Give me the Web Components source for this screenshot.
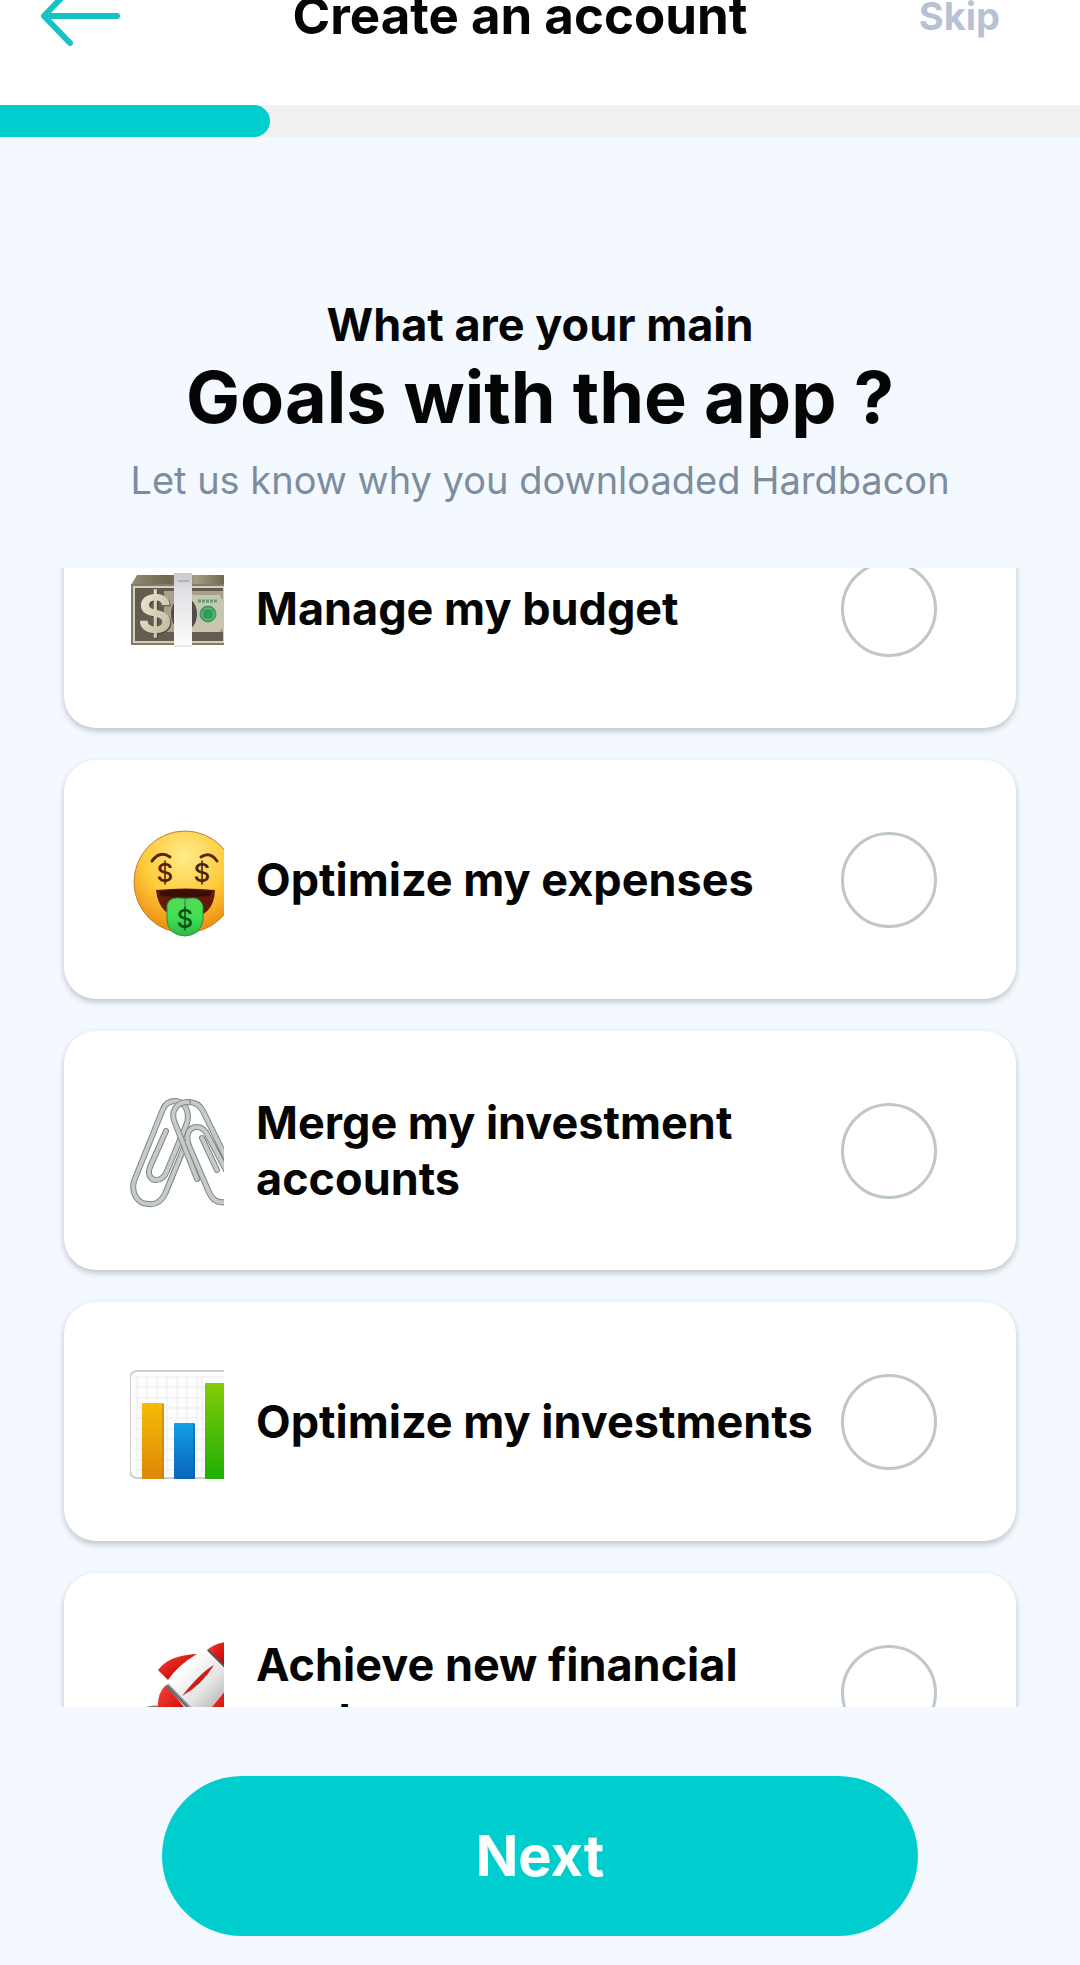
<!DOCTYPE html>
<html lang="en">
<head>
  <meta charset="UTF-8">
  <meta name="viewport" content="width=device-width, initial-scale=1.0">
  <title>Create an account</title>
  <style>
    body {
      margin: 0;
      background: #f4f9ff;
      font-family: Inter, "Liberation Sans", sans-serif;
      color: #050505;
    }
  </style>
</head>
<body>
  <goals-page></goals-page>

  <script>
    const icons = {
      money: `
        <defs>
          <linearGradient id="edge" x1="0" x2="1"><stop offset="0" stop-color="#918c77"/><stop offset=".4" stop-color="#6d6650"/><stop offset=".7" stop-color="#a39d86"/><stop offset="1" stop-color="#6e6851"/></linearGradient>
          <linearGradient id="band" x1="0" x2="0" y1="0" y2="1"><stop offset="0" stop-color="#c9cacf"/><stop offset=".25" stop-color="#e0e1e5"/><stop offset="1" stop-color="#fdfdfe"/></linearGradient>
          <linearGradient id="coin" x1="0" x2="1" y1="0" y2="1"><stop offset="0" stop-color="#f3f0dc"/><stop offset="1" stop-color="#b9b292"/></linearGradient>
        </defs>
        <path d="M7 27H94V37H1Z" fill="url(#edge)"/>
        <path d="M1 36H94V97H1Z" fill="#817c68"/>
        <path d="M4 39H94V94H4Z" fill="#625d50" stroke="#d5cfb6" stroke-width="2"/>
        <path d="M34 43H93V84H34Z" fill="#a8a28d"/>
        <path d="M62 47H90Q90 51 94 52V80Q90 81 89 84H62Z" fill="#c9c5b1"/>
        <ellipse cx="54" cy="66" rx="13" ry="17" fill="#514f47"/>
        <path d="M68 53H87" stroke="#56a66f" stroke-width="3" stroke-dasharray="3 1"/>
        <circle cx="78" cy="66" r="8" fill="#2f9d59" stroke="#3f9f64"/>
        <circle cx="78" cy="66" r="6" fill="none" stroke="#8bc49a"/>
        <text x="26" y="86" font-size="53" font-weight="700" text-anchor="middle" fill="#49453a">$</text>
        <text x="25" y="85" font-size="53" font-weight="700" text-anchor="middle" fill="url(#coin)">$</text>
        <path d="M44 25H62V99H44Z" fill="url(#band)"/>
        <path d="M48 33H59" stroke="#b1b2b8" stroke-width="2"/>
        <path d="M44 98H62" stroke="#d4d5d8"/>`,
      face: `
        <defs>
          <radialGradient id="skin" cx=".5" cy=".25" r=".75"><stop offset="0" stop-color="#ffeb8c"/><stop offset=".55" stop-color="#fdcb3a"/><stop offset="1" stop-color="#ee8a10"/></radialGradient>
          <linearGradient id="tongue" x1="0" x2="0" y1="0" y2="1"><stop offset="0" stop-color="#57d957"/><stop offset=".5" stop-color="#3fe052"/><stop offset="1" stop-color="#2fb84b"/></linearGradient>
        </defs>
        <circle cx="55" cy="63" r="51" fill="url(#skin)" stroke="#bb8331" stroke-width="1"/>
        <path d="M22 42Q30 31 40 38M71 38Q80 32 87 42" fill="none" stroke="#592508" stroke-width="3" stroke-linecap="round"/>
        <g font-size="26" font-weight="500" text-anchor="middle" fill="#4f2106">
          <text x="35" y="63">$</text>
          <text x="72" y="63">$</text>
        </g>
        <path d="M26 71Q55 68 85 71Q84 99 56 99Q29 99 26 71Z" fill="#611b08"/>
        <path d="M29 72Q55 69 82 72L80 77Q55 79 31 77Z" fill="#3b0d04"/>
        <path d="M37 86Q39 79 47 79Q53 79 55 80Q58 79 64 79Q71 80 73 87V101Q71 116 55 117Q38 116 37 101Z" fill="url(#tongue)" stroke="#249337"/>
        <path d="M55 81V90" stroke="#217e31" stroke-width="1"/>
        <text x="55" y="109" font-size="26" font-weight="500" text-anchor="middle" fill="#0c531b">$</text>`,
      clips: `
        <g fill="none" stroke-linecap="round" stroke-linejoin="round">
          <g stroke="#7e8585" stroke-width="6">
            <path id="right" d="M87 80L72 48M96 112C86 114 81 108 78 100L59 56C55 45 59 37 67 37C74 37 77 43 79 48L96 80M96 68L73 21C70 15 65 12 58 12"/>
            <path id="left" d="M36 41L20 77C17 85 21 90 26 90C32 90 35 86 37 81L57 33C60 22 55 12 46 11C39 11 35 14 33 19L4 91C1 103 7 114 19 114C27 115 32 110 35 104L56 53"/>
          </g>
          <g stroke="#c5cbca" stroke-width="4"><use href="#right"/><use href="#left"/></g>
          <path d="M58 12C46 12 40 22 45 33L67 89" stroke="#7e8585" stroke-width="6"/>
          <path d="M58 12C46 12 40 22 45 33L67 89" stroke="#c5cbca" stroke-width="4"/>
        </g>`,
      chart: `
        <defs>
          <linearGradient id="orange" x1="0" x2="0" y1="0" y2="1"><stop offset="0" stop-color="#f5bb08"/><stop offset="1" stop-color="#df8609"/></linearGradient>
          <linearGradient id="blue" x1="0" x2="0" y1="0" y2="1"><stop offset="0" stop-color="#159ee2"/><stop offset="1" stop-color="#0864bd"/></linearGradient>
          <linearGradient id="green" x1="0" x2="0" y1="0" y2="1"><stop offset="0" stop-color="#83cb07"/><stop offset="1" stop-color="#1fae06"/></linearGradient>
        </defs>
        <rect x="0" y="10" width="110" height="107" rx="7" fill="#fdfdfd" stroke="#cfcfcf" stroke-width="2"/>
        <path d="M7 14V114M17 14V114M27 14V114M37 14V114M47 14V114M57 14V114M67 14V114M72 14V114M4 16H94M4 26H94M4 37H94M4 47H94M4 57H94M4 68H94M4 78H94M4 88H94M4 99H94M4 109H94" stroke="#ececec" stroke-width="1"/>
        <rect x="12" y="42" width="22" height="76" rx="1" fill="url(#orange)"/>
        <rect x="44" y="62" width="21" height="56" rx="1" fill="url(#blue)"/>
        <rect x="75" y="22" width="22" height="96" rx="1" fill="url(#green)"/>
        <path d="M33 43V118" stroke="#b5790f"/>
        <path d="M64 63V118" stroke="#125997"/>`,
      rocket: `
        <defs>
          <linearGradient id="hull" x1="0" x2="1" y1="0" y2="1"><stop offset=".3" stop-color="#fdfdfd"/><stop offset=".6" stop-color="#e4e4e4"/><stop offset="1" stop-color="#a4a4a4"/></linearGradient>
          <linearGradient id="fin" x1="0" x2="1" y1="0" y2="1"><stop offset="0" stop-color="#f2453d"/><stop offset=".5" stop-color="#dd1713"/><stop offset="1" stop-color="#9c0d0a"/></linearGradient>
        </defs>
        <path d="M12 77Q20 72 31 74L36 90L20 108Q8 95 12 77Z" fill="#7d7766"/>
        <path d="M36 53Q27 61 28 76L34 92L68 92Z" fill="url(#fin)"/>
        <path d="M96 57L80 76L76 108Q96 96 100 70Z" fill="url(#fin)"/>
        <path d="M37 48Q45 33 67 22Q74 18 79 19L100 42L96 58L78 80L62 80Z" fill="url(#hull)"/>
        <path d="M28 38Q39 23 67 22Q48 33 38 48Z" fill="url(#fin)"/>
        <path d="M77 18Q84 12 96 10V36Z" fill="url(#fin)"/>
        <path d="M78 18L95 35" stroke="#555" stroke-width="2"/>
        <path d="M84 33Q71 40 52 64Q72 53 84 33Z" fill="#c9201c"/>
        <path d="M37 53L64 81" stroke="#6f6f6f" stroke-width="4"/>
        <path d="M38 52L65 80" stroke="#c8c8c8" stroke-width="1"/>`
    };

    class AppHeader extends HTMLElement {
      constructor() {
        super();
        this.attachShadow({ mode: "open" });

        this.shadowRoot.innerHTML = `
          <style>
            :host {
              display: block;
              background: #fff;
            }

            header {
              display: grid;
              grid-template-columns: 1fr auto 1fr;
              grid-template-rows: 32px;
              align-items: center;
              padding: 0 80px 73px 40px;
            }

            button {
              padding: 0;
              border: none;
              background: none;
              font: inherit;
              cursor: pointer;
            }

            .back {
              justify-self: start;
              display: flex;
            }

            h1 {
              margin: 0;
              font-size: 51px;
              line-height: 56px;
              font-weight: 700;
            }

            .skip {
              justify-self: end;
              font-size: 38px;
              line-height: 48px;
              font-weight: 700;
              color: #b7c3d5;
            }
          </style>

          <header>
            <button class="back" aria-label="Back">
              <svg width="82" height="60" viewBox="0 0 82 60" fill="none" stroke="#14c4c4" stroke-width="6" stroke-linecap="round" stroke-linejoin="round">
                <path d="M77 30H4M30 3L4 30L30 57"/>
              </svg>
            </button>
            <h1><slot></slot></h1>
            <button class="skip">Skip</button>
          </header>
        `;
      }
    }

    class StepProgress extends HTMLElement {
      constructor() {
        super();
        this.attachShadow({ mode: "open" });

        this.shadowRoot.innerHTML = `
          <style>
            :host {
              display: block;
              height: 32px;
              background: #f0f0f0;
            }

            .fill {
              height: 100%;
              border-radius: 0 16px 16px 0;
              background: #00cece;
            }
          </style>

          <div class="fill"></div>
        `;
      }

      connectedCallback() {
        this.shadowRoot.querySelector(".fill").style.width = this.getAttribute("value") + "%";
      }
    }

    class GoalCard extends HTMLElement {
      constructor() {
        super();
        this.attachShadow({ mode: "open" });

        this.shadowRoot.innerHTML = `
          <style>
            :host {
              display: block;
            }

            label {
              display: flex;
              align-items: center;
              box-sizing: border-box;
              min-height: 239px;
              padding: 24px 79px 24px 66px;
              border-radius: 32px;
              background: #fff;
              box-shadow: 0 3px 6px rgba(0, 0, 0, 0.22);
              cursor: pointer;
            }

            svg {
              flex: none;
              width: 94px;
              height: 120px;
              margin: 0 32px 2px 0;
              overflow: hidden;
            }

            span {
              flex: 1;
              font-size: 45px;
              line-height: 56px;
              font-weight: 700;
            }

            input {
              flex: none;
              appearance: none;
              box-sizing: border-box;
              width: 96px;
              height: 96px;
              margin: 0;
              border: 3px solid #bdc7cc;
              border-radius: 50%;
              cursor: pointer;
            }

            input:checked {
              border-color: #00cece;
              background: #00cece;
            }
          </style>

          <label>
            <svg viewBox="0 0 94 120" aria-hidden="true"></svg>
            <span><slot></slot></span>
            <input type="checkbox">
          </label>
        `;
      }

      connectedCallback() {
        this.shadowRoot.querySelector("svg").innerHTML = icons[this.getAttribute("icon")];
      }
    }

    class GoalList extends HTMLElement {
      constructor() {
        super();
        this.attachShadow({ mode: "open" });

        this.shadowRoot.innerHTML = `
          <style>
            :host {
              display: flex;
              flex-direction: column;
              gap: 32px;
              padding: 0 64px;
              overflow-y: auto;
              scrollbar-width: none;
            }
          </style>

          <slot></slot>
        `;
      }
    }

    class NextButton extends HTMLElement {
      constructor() {
        super();
        this.attachShadow({ mode: "open" });

        this.shadowRoot.innerHTML = `
          <style>
            :host {
              display: block;
              padding: 69px 15% 29px;
            }

            button {
              width: 100%;
              height: 160px;
              border: none;
              border-radius: 80px;
              background: #00cece;
              color: #fff;
              font: inherit;
              font-size: 56px;
              font-weight: 700;
              cursor: pointer;
            }
          </style>

          <button><slot></slot></button>
        `;
      }
    }

    class GoalsPage extends HTMLElement {
      constructor() {
        super();
        this.attachShadow({ mode: "open" });

        this.shadowRoot.innerHTML = `
          <style>
            :host {
              display: flex;
              flex-direction: column;
              height: 100vh;
              overflow: hidden;
            }

            .intro {
              padding: 160px 24px 56px;
              text-align: center;
            }

            h2 {
              margin: 0;
              font-size: 45px;
              line-height: 56px;
              font-weight: 700;
            }

            h2 strong {
              display: block;
              font-size: 72px;
              line-height: 88px;
              font-weight: 700;
            }

            p {
              margin: 8px 0 0;
              font-size: 38px;
              line-height: 63px;
              color: #7c8d9e;
            }

            goal-list {
              flex: 1;
              min-height: 0;
            }
          </style>

          <app-header>Create an account</app-header>
          <step-progress value="25"></step-progress>
          <div class="intro">
            <h2>What are your main <strong>Goals with the app ?</strong></h2>
            <p>Let us know why you downloaded Hardbacon</p>
          </div>
          <goal-list>
            <goal-card icon="money">Manage my budget</goal-card>
            <goal-card icon="face">Optimize my expenses</goal-card>
            <goal-card icon="clips">Merge my investment accounts</goal-card>
            <goal-card icon="chart">Optimize my investments</goal-card>
            <goal-card icon="rocket">Achieve new financial goals</goal-card>
          </goal-list>
          <next-button>Next</next-button>
        `;
      }

      connectedCallback() {
        // the cards are laid out by now, so the list can scroll
        this.shadowRoot.querySelector("goal-list").scrollTop = 79;
      }
    }

    customElements.define("app-header", AppHeader);
    customElements.define("step-progress", StepProgress);
    customElements.define("goal-card", GoalCard);
    customElements.define("goal-list", GoalList);
    customElements.define("next-button", NextButton);
    customElements.define("goals-page", GoalsPage);
  </script>
</body>
</html>
